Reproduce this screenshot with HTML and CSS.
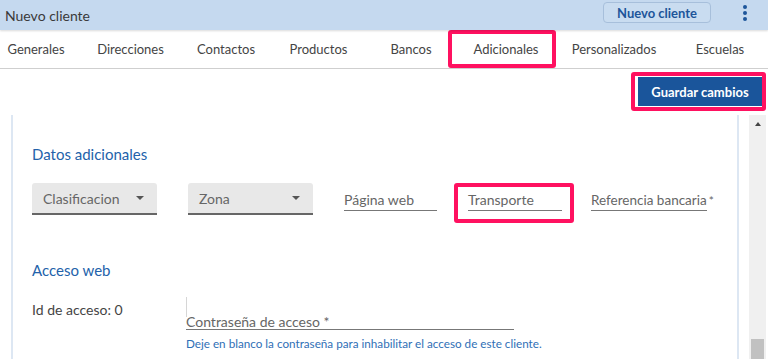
FILE: index.html
```html
<!DOCTYPE html>
<html lang="es">
<head>
    <meta charset="UTF-8">
    <meta name="viewport" content="width=device-width, initial-scale=1.0">
    <title>Nuevo cliente</title>
    <link rel="stylesheet" href="styles.css">
</head>
<body>
    <div class="header">
        <div class="title">Nuevo cliente</div>
        <button class="header-button">Nuevo cliente</button>
        <div class="kebab"><span></span><span></span><span></span></div>
    </div>

    <div class="tabs">
        <div class="tab">Generales</div>
        <div class="tab">Direcciones</div>
        <div class="tab">Contactos</div>
        <div class="tab">Productos</div>
        <div class="tab">Bancos</div>
        <div class="tab marked">Adicionales</div>
        <div class="tab">Personalizados</div>
        <div class="tab">Escuelas</div>
    </div>

    <div class="actions">
        <div class="marked-box save-box">
            <button class="save-button">Guardar cambios</button>
        </div>
    </div>

    <div class="main">
        <div class="panel">
            <h2 class="section-title">Datos adicionales</h2>
            <div class="form-row">
                <div class="select">Clasificacion <span class="caret"></span></div>
                <div class="select">Zona <span class="caret"></span></div>
                <div class="field web">Página web</div>
                <div class="marked-box field-box">
                    <div class="field transport">Transporte</div>
                </div>
                <div class="field ref"><span class="ref-label">Referencia bancaria</span><span class="star">*</span></div>
            </div>

            <h2 class="section-title second">Acceso web</h2>
            <div class="access-row">
                <div class="access-id">Id de acceso: 0</div>
                <div class="password">
                    <div class="pass">
                        <div class="pass-line"></div>
                        <div class="pass-label">Contraseña de acceso *</div>
                    </div>
                    <p class="hint">Deje en blanco la contraseña para inhabilitar el acceso de este cliente.</p>
                </div>
            </div>
        </div>
        <div class="scrollbar">
            <div class="arrow"></div>
            <div class="thumb"></div>
        </div>
    </div>
</body>
</html>
```

FILE: styles.css
```css
body {
    margin: 0;
    padding: 0;
    font-family: Lato, "Open Sans", sans-serif;
    color: #444;
    background: #fff;
    width: 768px;
    height: 362px;
    overflow: hidden;
}
button {
    font-family: inherit;
    cursor: pointer;
}

.header {
    height: 30px;
    background-color: #c5d9ef;
    display: flex;
    align-items: center;
    padding: 0 0 0 5px;
    box-shadow: 0 1px 2px rgba(0, 0, 0, 0.15);
    position: relative;
}
.title {
    flex: 1;
    font-size: 14px;
    color: #3a3a3a;
}
.header-button {
    height: 21px;
    width: 108px;
    margin-top: -5px;
    background: #c9dcf0;
    border: 1px solid #a7bfdb;
    border-radius: 4px;
    color: #1d559a;
    font-size: 13px;
    font-weight: bold;
    padding: 0;
}
.kebab {
    width: 4px;
    margin: -4px 21px 0 32px;
    display: flex;
    flex-direction: column;
    gap: 2px;
}
.kebab span {
    width: 4px;
    height: 4px;
    border-radius: 50%;
    background: #1d559a;
}

.tabs {
    display: grid;
    grid-template-columns: 72px 117px 74px 111px 74px 108px 116px 96px;
    height: 38px;
    border-bottom: 1px solid #cfcfcf;
}
.tab {
    display: flex;
    align-items: center;
    justify-content: center;
    font-size: 13px;
    color: #444;
}
.marked {
    border: 4px solid #ff1160;
    border-radius: 3px;
    padding-left: 8px;
}

.actions {
    display: flex;
    justify-content: flex-end;
    padding: 3px 2px 0 0;
    height: 46px;
    box-sizing: border-box;
}
.marked-box {
    border: 4px solid #ff1160;
    border-radius: 3px;
}
.save-box {
    height: 39px;
    padding: 1px 0 1px 3px;
    box-sizing: border-box;
}
.save-button {
    height: 29px;
    width: 124px;
    background: #1a559b;
    color: #fff;
    border: none;
    font-size: 13px;
    font-weight: bold;
    padding: 0;
}

.main {
    display: flex;
    height: 244px;
}
.panel {
    margin-left: 11px;
    width: 705px;
    border-left: 2px solid #dde7f3;
    border-right: 2px solid #dde7f3;
    padding: 29px 0 0 19px;
}
.section-title {
    margin: 0;
    font-size: 15px;
    font-weight: normal;
    color: #2362aa;
    line-height: 20px;
}
.section-title.second {
    margin-top: 37px;
}

.form-row {
    display: flex;
    align-items: flex-start;
    margin-top: 19px;
    font-size: 14px;
    color: #666;
}
.select {
    width: 125px;
    height: 32px;
    box-sizing: border-box;
    background: #e8e8e8;
    border-bottom: 2px solid #666;
    border-radius: 3px 3px 0 0;
    padding: 0 13px 0 11px;
    margin-right: 31px;
    display: flex;
    align-items: center;
    justify-content: space-between;
}
.caret {
    width: 0;
    height: 0;
    border-left: 4px solid transparent;
    border-right: 4px solid transparent;
    border-top: 4px solid #555;
}
.field {
    height: 28px;
    box-sizing: border-box;
    padding-top: 9px;
    line-height: 16px;
    white-space: nowrap;
}
.web {
    width: 93px;
    border-bottom: 1px solid #777;
    margin-right: 17px;
}
.field-box {
    width: 120px;
    height: 40px;
    box-sizing: border-box;
    padding: 0 8px 0 10px;
}
.transport {
    height: 24px;
    padding-top: 5px;
    border-bottom: 1px solid #777;
}
.ref {
    margin-left: 17px;
    font-size: 13.5px;
}
.ref-label {
    display: inline-block;
    height: 18px;
    border-bottom: 1px solid #777;
}
.star {
    margin-left: 2px;
    font-size: 12px;
}

.access-row {
    display: flex;
    margin-top: 13px;
    font-size: 14px;
}
.access-id {
    width: 154px;
    padding-top: 8px;
    color: #444;
}
.password {
    width: 328px;
}
.pass {
    height: 37px;
    box-sizing: border-box;
    padding-top: 4px;
    border-bottom: 1px solid #777;
    color: #666;
}
.pass-line {
    height: 20px;
    margin-bottom: -3px;
    border-left: 1px solid #d6d6d6;
}
.pass-label {
    line-height: 16px;
    white-space: nowrap;
}
.hint {
    margin: 6px 0 0;
    font-size: 11.7px;
    color: #2f6fb6;
    white-space: nowrap;
}

.scrollbar {
    margin-left: 10px;
    width: 17px;
    background: #f0f0f0;
    position: relative;
}
.arrow {
    margin: 7px auto 0;
    width: 0;
    height: 0;
    border-left: 3px solid transparent;
    border-right: 3px solid transparent;
    border-bottom: 4px solid #444;
}
.thumb {
    position: absolute;
    left: 2px;
    right: 2px;
    bottom: 0;
    height: 20px;
    background: #c1c1c1;
}
```
